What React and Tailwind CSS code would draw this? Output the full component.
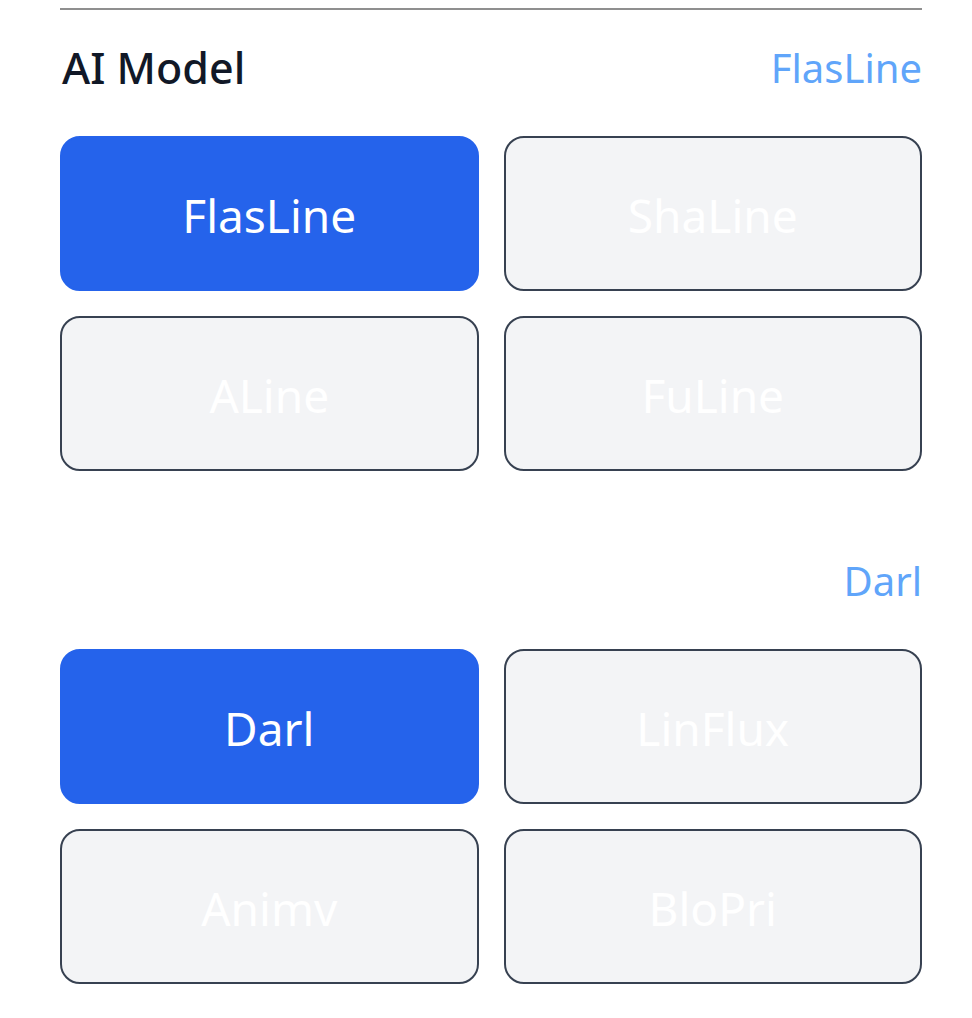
import React from 'react';

const ModelButton = ({ label, active = false }) => (
  <button
    className={`h-[155px] rounded-[20px] border-2 text-[46px] pt-[4px] ${
      active
        ? 'bg-[#2563eb] border-[#2563eb] text-white'
        : 'bg-[#f3f4f6] border-[#374151] text-white'
    }`}
  >
    {label}
  </button>
);

const ModelGroup = ({ models, selected }) => (
  <div className="grid grid-cols-2 gap-[25px]">
    {models.map((m) => (
      <ModelButton key={m} label={m} active={m === selected} />
    ))}
  </div>
);

export default function App() {
  return (
    <div className="bg-white min-h-[1018px] pt-[8px] font-['Noto_Sans',sans-serif]">
      <div className="ml-[60px] w-[862px]">
        <div className="border-t-2 border-[#8f8f8f]" />

        {/* Header */}
        <div className="mt-[28px] h-[60px] flex items-center justify-between">
          <h2 className="ml-[2px] text-[43px] font-medium text-[#111827]">AI Model</h2>
          <span className="text-[40px] text-[#60a5fa]">FlasLine</span>
        </div>

        <div className="mt-[38px]">
          <ModelGroup models={['FlasLine', 'ShaLine', 'ALine', 'FuLine']} selected="FlasLine" />
        </div>

        <div className="mt-[80px] h-[60px] flex items-center justify-end">
          <span className="text-[40px] text-[#60a5fa]">Darl</span>
        </div>

        <div className="mt-[38px]">
          <ModelGroup models={['Darl', 'LinFlux', 'Animv', 'BloPri']} selected="Darl" />
        </div>
      </div>
    </div>
  );
}
